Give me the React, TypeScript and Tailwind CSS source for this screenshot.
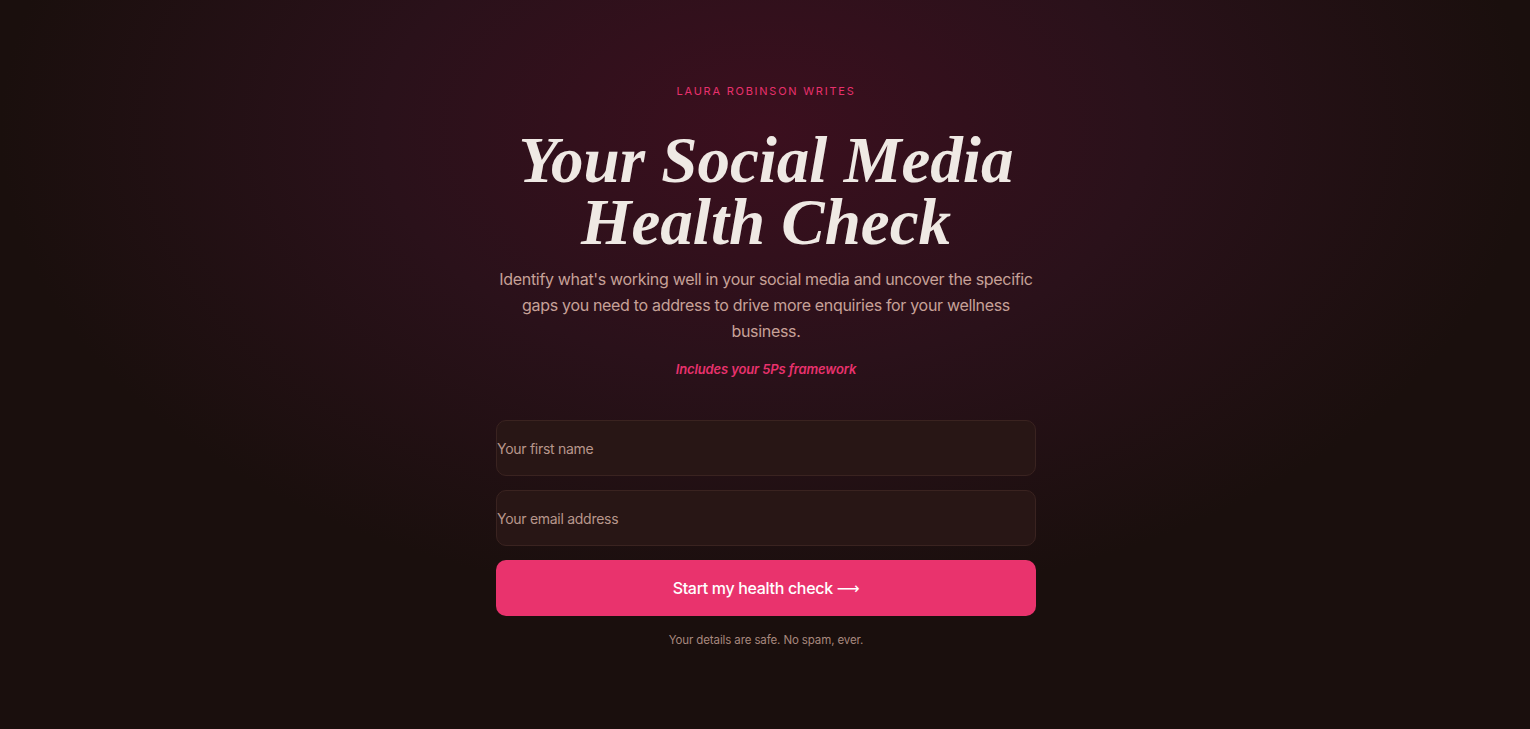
import React from "react";

export default function App() {
  return (
    <div className="min-h-[729px] w-full bg-[#1a0f0d] bg-[radial-gradient(ellipse_50%_65%_at_50%_18%,#3b0f1e_0%,#2a111a_50%,#1a0f0d_100%)] font-['Inter','Lato',sans-serif]">
      <div className="mx-auto flex w-[540px] translate-x-[1px] flex-col items-center pt-[84px]">
        <div className="text-[11px] leading-[14px] tracking-[0.16em] text-[#e8316d]">
          LAURA ROBINSON WRITES
        </div>
        <h1 className="mt-[31px] text-center font-['Liberation_Serif',serif] text-[65px] font-bold italic leading-[62px] text-[#efe9e4]">
          Your Social Media
          <br />
          Health Check
        </h1>
        <p className="mt-[13px] w-[548px] text-center text-[16px] leading-[26px] tracking-[-0.02em] text-[#c7a198]">
          Identify what's working well in your social media and uncover the specific gaps you need to address to drive more enquiries for your wellness business.
        </p>
        <p className="mt-[16px] text-[13px] font-semibold italic leading-[18px] tracking-[-0.01em] text-[#e8316d]">
          Includes your 5Ps framework
        </p>
        <form className="mt-[42px] flex w-full flex-col gap-[14px]" onSubmit={(e) => e.preventDefault()}>
          <input
            type="text"
            placeholder="Your first name"
            className="h-[56px] w-full rounded-[10px] border border-[#3a2320] bg-[#281615] px-0 text-[14px] tracking-[-0.02em] text-[#efe9e4] placeholder:text-[#b8968c] outline-none"
          />
          <input
            type="email"
            placeholder="Your email address"
            className="h-[56px] w-full rounded-[10px] border border-[#3a2320] bg-[#281615] px-0 text-[14px] tracking-[-0.02em] text-[#efe9e4] placeholder:text-[#b8968c] outline-none"
          />
          <button
            type="submit"
            className="h-[56px] w-full rounded-[10px] bg-[#e9336d] text-[16px] font-medium tracking-[-0.02em] text-white"
          >
            Start my health check <span className="font-['DejaVu_Sans',sans-serif] font-normal">⟶</span>
          </button>
        </form>
        <p className="mt-[16px] text-[11.5px] leading-[16px] tracking-[-0.01em] text-[#a8887e]">
          Your details are safe. No spam, ever.
        </p>
      </div>
    </div>
  );
}
